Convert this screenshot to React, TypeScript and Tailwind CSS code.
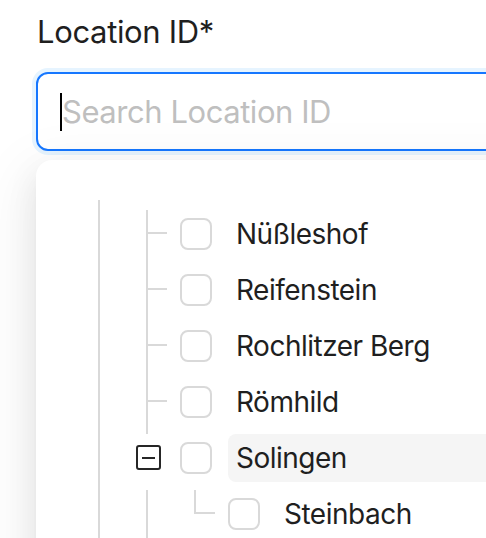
import React from "react";

type Row = {
  name: string;
  indents: number;
  kind: "leaf" | "leafLast" | "open";
  hover?: boolean;
};

const rows: Row[] = [
  { name: "Nüßleshof", indents: 1, kind: "leaf" },
  { name: "Reifenstein", indents: 1, kind: "leaf" },
  { name: "Rochlitzer Berg", indents: 1, kind: "leaf" },
  { name: "Römhild", indents: 1, kind: "leaf" },
  { name: "Solingen", indents: 1, kind: "open", hover: true },
  { name: "Steinbach", indents: 2, kind: "leafLast" },
];

function Indent() {
  return (
    <div className="relative w-[48px] h-full shrink-0">
      <div className="absolute left-[24px] top-0 bottom-0 w-[2px] bg-[#d9d9d9]" />
    </div>
  );
}

function Switcher({ kind }: { kind: Row["kind"] }) {
  if (kind === "open") {
    return (
      <div className="w-[48px] h-full shrink-0 pl-[14px] pt-[11px]">
        <div className="w-[25px] h-[25px] border-2 border-[#262626] rounded-[3px] flex items-center justify-center">
          <div className="w-[13px] h-[2px] bg-[#262626]" />
        </div>
      </div>
    );
  }
  return (
    <div className="relative w-[48px] h-full shrink-0">
      <div
        className={
          kind === "leafLast"
            ? "absolute left-[24px] top-0 h-[24px] w-[2px] bg-[#d9d9d9]"
            : "absolute left-[24px] top-0 bottom-0 w-[2px] bg-[#d9d9d9]"
        }
      />
      <div className="absolute left-[26px] top-[22px] w-[19px] h-[2px] bg-[#d9d9d9]" />
    </div>
  );
}

export default function App() {
  return (
    <div
      className="w-[486px] h-[538px] overflow-hidden bg-white text-[#1f1f1f]"
      style={{ fontFamily: "Inter, 'Noto Sans', Arial, sans-serif" }}
    >
      <div className="w-[640px] pl-[36px]">
        <div className="pt-[10px] pl-[1px] text-[31px] leading-[44px] tracking-[-0.35px]">Location ID*</div>
        <div className="mt-[18px] h-[79px] rounded-[12px] border-2 border-[#1677ff] shadow-[0_0_0_4px_rgba(5,145,255,0.1)] bg-white flex items-center pl-[22px]">
          <div className="w-[2px] h-[38px] bg-black shrink-0" />
          <span className="text-[31px] text-[#bfbfbf] leading-[44px] tracking-[-0.45px]">Search Location ID</span>
        </div>
        <div className="mt-[9px] h-[440px] rounded-[16px] bg-white shadow-[0_12px_32px_0_rgba(0,0,0,0.08),0_6px_12px_-8px_rgba(0,0,0,0.12),0_18px_56px_16px_rgba(0,0,0,0.05)] pl-[38px] pt-[40px]">
          <div className="flex h-[10px]">
            <Indent />
          </div>
          {rows.map((r) => (
            <div key={r.name} className="flex h-[56px] items-start">
              {Array.from({ length: r.indents }).map((_, i) => (
                <Indent key={i} />
              ))}
              <Switcher kind={r.kind} />
              <div className="ml-[10px] mt-[8px] w-[32px] h-[32px] rounded-[8px] border-2 border-[#d9d9d9] bg-white shrink-0" />
              <div
                className={
                  "ml-[16px] h-[48px] flex-1 flex items-center px-[8px] rounded-[8px] text-[28px] leading-[44px] tracking-[-0.5px] " +
                  (r.hover ? "bg-[#f5f5f5]" : "")
                }
              >
                {r.name}
              </div>
            </div>
          ))}
        </div>
      </div>
    </div>
  );
}
